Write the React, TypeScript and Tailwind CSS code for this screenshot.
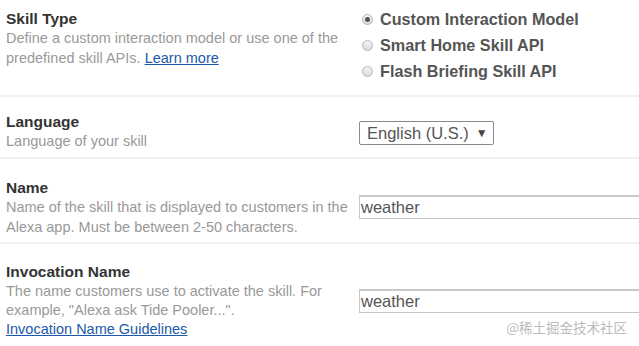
const font = "font-['Liberation_Sans',Arial,sans-serif]";

function Radio({ checked, label }: { checked?: boolean; label: string }) {
  return (
    <label className="flex h-[26px] items-center gap-[7px]">
      <span className="flex h-[11px] w-[11px] items-center justify-center rounded-full border border-[#b5b5b5] bg-gradient-to-b from-[#f4f4f4] to-[#dcdcdc]">
        {checked && <span className="h-[5px] w-[5px] rounded-full bg-[#555]" />}
      </span>
      <span className="text-[16.2px] font-bold text-[#555]">{label}</span>
    </label>
  );
}

function Field({ title, children, right, className }: { title: string; children: React.ReactNode; right: React.ReactNode; className?: string }) {
  return (
    <div className={"flex border-b-2 border-[#f0f0f0] " + (className ?? "")}>
      <div className="w-[359px] shrink-0 pl-[6px] pr-[10px]">
        <div className="text-[15.5px] font-bold leading-[20px] text-[#333]">{title}</div>
        <div className="text-[14.5px] leading-[19.5px] text-[#999]">{children}</div>
      </div>
      <div className="flex-1">{right}</div>
    </div>
  );
}

function TextInput({ value }: { value: string }) {
  return (
    <div className="-mr-[4px] flex h-[24px] items-center border border-[#c6c6c6] border-t-2 border-t-[#c8c8c8] pl-[1px] text-[16.5px] text-[#555]">
      {value}
    </div>
  );
}

export default function App() {
  return (
    <div className={`${font} relative h-[346px] w-[639px] overflow-hidden bg-white`}>
      <Field
        title="Skill Type"
        className="h-[97px] pt-[9px]"
        right={
          <div className="-mt-[3px] pl-[3px]">
            <Radio checked label="Custom Interaction Model" />
            <Radio label="Smart Home Skill API" />
            <Radio label="Flash Briefing Skill API" />
          </div>
        }
      >
        Define a custom interaction model or use one of the predefined skill APIs.{" "}
        <a className="text-[#1a5aa8] underline">Learn more</a>
      </Field>

      <Field
        title="Language"
        className="h-[62px] pt-[15px]"
        right={
          <div className="pt-[9px]">
            <div className="inline-flex h-[24px] w-[135px] items-center rounded-[2px] border border-[#8a8a8a] pl-[7px] text-[16.5px] text-[#555]">
              English (U.S.) <span className="ml-[7px] text-[12px] text-[#444]">▼</span>
            </div>
          </div>
        }
      >
        Language of your skill
      </Field>

      <Field
        title="Name"
        className="h-[85px] pt-[19px]"
        right={
          <div className="pt-[17px]">
            <TextInput value="weather" />
          </div>
        }
      >
        Name of the skill that is displayed to customers in the Alexa app. Must be between 2-50 characters.
      </Field>

      <div className="flex pt-[18px]">
        <div className="w-[359px] shrink-0 pl-[6px] pr-[10px]">
          <div className="text-[15.5px] font-bold leading-[20px] text-[#333]">Invocation Name</div>
          <div className="text-[14.5px] leading-[19px] text-[#999]">
            The name customers use to activate the skill. For example, "Alexa ask Tide Pooler...".
            <br />
            <a className="text-[#1a5aa8] underline">Invocation Name Guidelines</a>
          </div>
        </div>
        <div className="flex-1 pt-[27px]">
          <TextInput value="weather" />
        </div>
      </div>

      <div className="absolute right-[12px] top-[317px] text-[13.5px] text-[#bbb] font-['Noto_Sans_CJK_SC',sans-serif]">
        @稀土掘金技术社区
      </div>
    </div>
  );
}
